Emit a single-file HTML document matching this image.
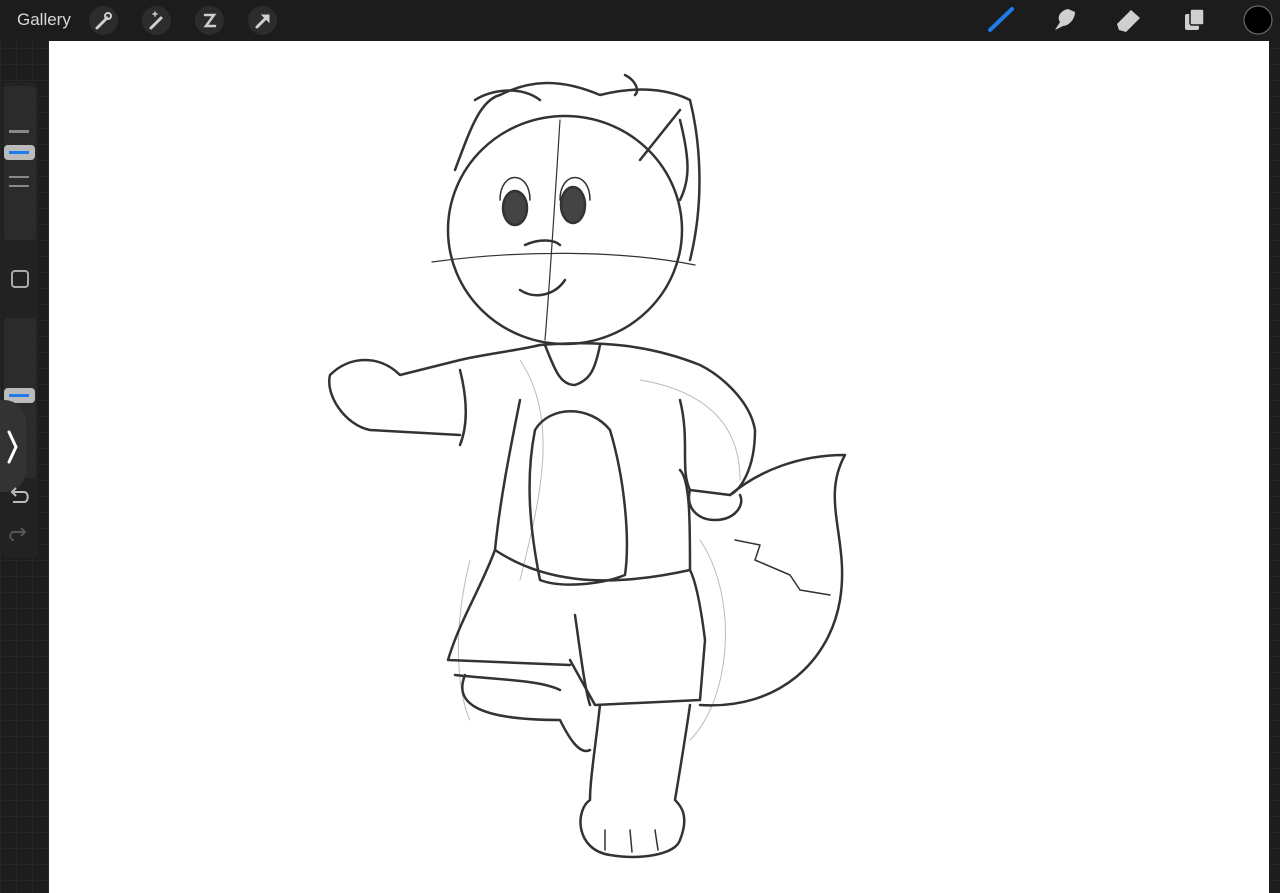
<!DOCTYPE html>
<html><head><style>
html,body{margin:0;padding:0;width:1280px;height:893px;overflow:hidden;background:#1c1c1c;font-family:"Liberation Sans",sans-serif}
.bg{position:absolute;inset:0;background-color:#1d1d1d;background-image:linear-gradient(#262626 1px,transparent 1px),linear-gradient(90deg,#262626 1px,transparent 1px);background-size:16px 16px}
.top{position:absolute;left:0;top:0;width:1280px;height:41px;background:#1c1c1c}
.canvas{position:absolute;left:49px;top:41px;width:1220px;height:852px;background:#fff}
.ic{position:absolute;top:6px;width:29px;height:29px;border-radius:50%;background:#2c2c2c}
</style></head><body>
<div class="bg"></div>
<div class="top"></div>
<div style="position:absolute;left:17px;top:10px;color:#d8d8d8;font-size:17px">Gallery</div>
<div class="ic" style="left:89px"></div><div class="ic" style="left:142px"></div><div class="ic" style="left:195px"></div><div class="ic" style="left:248px"></div>
<svg style="position:absolute;left:0;top:0" width="1280" height="41">
<g stroke="#cfcfcf" stroke-width="3" fill="none" stroke-linecap="round">
<path d="M97 28 L107 18"/><circle cx="108" cy="16" r="3" stroke-width="2"/>
<path d="M151 28 L161 18"/><path d="M153 14h4M155 12v4" stroke-width="1.5"/>
<path d="M205 15 L214 15 L206 26 L215 26" stroke-width="2.5"/>
<path d="M257 27 L267 17"/><path d="M262 15 L269 15 L269 22 Z" fill="#cfcfcf" stroke-width="1"/>
</g>
<path d="M990 30 L1012 9" stroke="#1f7bea" stroke-width="4" stroke-linecap="round"/>
<path d="M1055 30 L1060 22 C1056 16 1062 10 1068 9 L1075 12 C1075 20 1068 26 1063 26 Z" fill="#cfcfcf"/>
<path d="M1117 24 L1131 10 L1140 18 L1126 32 L1119 30 Z" fill="#cfcfcf"/>
<rect x="1185" y="14" width="14" height="16" rx="2" fill="#cfcfcf"/><rect x="1190" y="9" width="14" height="16" rx="2" fill="#cfcfcf" stroke="#1c1c1c" stroke-width="1.5"/>
<circle cx="1258" cy="20" r="14" fill="#000" stroke="#777" stroke-width="1"/>
</svg>
<div style="position:absolute;left:2px;top:82px;width:36px;height:476px;background:#222;border-radius:6px"></div>
<div style="position:absolute;left:4px;top:86px;width:32px;height:154px;background:#2b2b2b;border-radius:4px"></div>
<div style="position:absolute;left:4px;top:318px;width:32px;height:160px;background:#2b2b2b;border-radius:4px"></div>
<div style="position:absolute;left:9px;top:130px;width:20px;height:3px;background:#888"></div>
<div style="position:absolute;left:4px;top:145px;width:31px;height:15px;background:#bbb;border-radius:4px"></div>
<div style="position:absolute;left:9px;top:151px;width:20px;height:3px;background:#1f7bea"></div>
<div style="position:absolute;left:9px;top:176px;width:20px;height:2px;background:#888"></div>
<div style="position:absolute;left:9px;top:185px;width:20px;height:2px;background:#888"></div>
<div style="position:absolute;left:11px;top:270px;width:14px;height:14px;border:2px solid #aaa;border-radius:4px"></div>
<div style="position:absolute;left:4px;top:388px;width:31px;height:15px;background:#bbb;border-radius:4px"></div>
<div style="position:absolute;left:9px;top:394px;width:20px;height:3px;background:#1f7bea"></div>
<div style="position:absolute;left:-20px;top:400px;width:46px;height:92px;background:#333;border-radius:22px"></div>
<svg style="position:absolute;left:0;top:420px" width="40" height="130"><path d="M9 12 L16 27 L9 42" stroke="#fff" stroke-width="3" fill="none" stroke-linecap="round"/>
<path d="M14 72 L24 72 C29 72 29 82 24 82 L13 82 M16 68 L12 72 L16 76" stroke="#bbb" stroke-width="2" fill="none"/>
<path d="M24 112 L14 112 C9 112 9 120 14 120 M21 108 L25 112 L21 116" stroke="#555" stroke-width="2" fill="none"/></svg>
<div class="canvas"></div>
<svg style="position:absolute;left:0;top:0" width="1280" height="893" fill="none" stroke="#333" stroke-width="2.5" stroke-linecap="round" stroke-linejoin="round">
<g stroke="#bbb" stroke-width="1"><path d="M470 560 C450 640 460 700 470 720 M700 540 C740 600 730 700 690 740 M640 380 C700 390 740 420 740 480 M520 360 C560 420 540 500 520 580"/></g>
<ellipse cx="565" cy="230" rx="117" ry="114"/>
<path d="M455 170 C470 130 480 100 500 95 C530 80 560 78 600 95 C640 85 670 90 690 100 C700 140 705 200 690 260"/>
<path d="M475 100 C490 90 520 85 540 100 M625 75 C635 80 640 90 635 95 M680 110 L640 160 M680 120 C690 160 690 180 680 200"/>
<path d="M432 262 C520 250 620 250 695 265 M560 120 C555 200 550 280 545 340" stroke-width="1.2"/>
<ellipse cx="515" cy="208" rx="12" ry="17" fill="#444"/><ellipse cx="573" cy="205" rx="12" ry="18" fill="#444"/>
<path d="M500 200 C500 170 530 170 530 200 M560 200 C560 170 590 170 590 200" stroke-width="1.5"/>
<path d="M525 245 C540 238 555 240 560 245 M520 290 C535 300 555 295 565 280"/>
<path d="M540 345 C520 350 480 355 460 360 L400 375 C380 355 350 355 330 375 C325 395 345 425 370 430 L460 435 M460 370 C465 390 470 420 460 445"/>
<path d="M540 345 C600 340 650 345 700 365 C720 375 750 400 755 430 C755 470 740 490 730 495 L690 490 C680 470 690 440 680 400"/>
<path d="M545 345 C555 370 560 385 575 385 C590 380 595 370 600 345"/>
<path d="M520 400 C510 450 500 500 495 550 C540 580 600 590 690 570 C690 520 690 480 680 470"/>
<path d="M535 430 C550 405 590 405 610 430 C625 480 630 540 625 575 C600 585 560 588 540 580 C530 530 525 480 535 430"/>
<path d="M690 490 C685 510 700 520 715 520 C735 520 745 505 740 495"/>
<path d="M730 495 C760 470 800 455 845 455 C820 500 850 540 840 600 C830 660 780 710 700 705"/>
<path d="M735 540 L760 545 L755 560 L790 575 L800 590 L830 595" stroke-width="1.5"/>
<path d="M495 550 C480 590 460 620 448 660 L570 665 M570 660 L595 705 L700 700 L705 640 C700 600 695 580 690 570 M575 615 C580 650 585 690 590 705"/>
<path d="M465 675 C455 700 470 720 560 720 C570 740 580 755 590 750 M455 675 C500 680 540 680 560 690"/>
<path d="M600 705 C595 750 590 780 590 800 C575 810 575 850 610 855 C640 860 675 855 680 840 C690 815 680 805 675 800 C680 770 685 740 690 705"/>
<path d="M605 830 L605 850 M630 830 L632 852 M655 830 L658 850" stroke-width="1.5"/>
</svg>
</body></html>
